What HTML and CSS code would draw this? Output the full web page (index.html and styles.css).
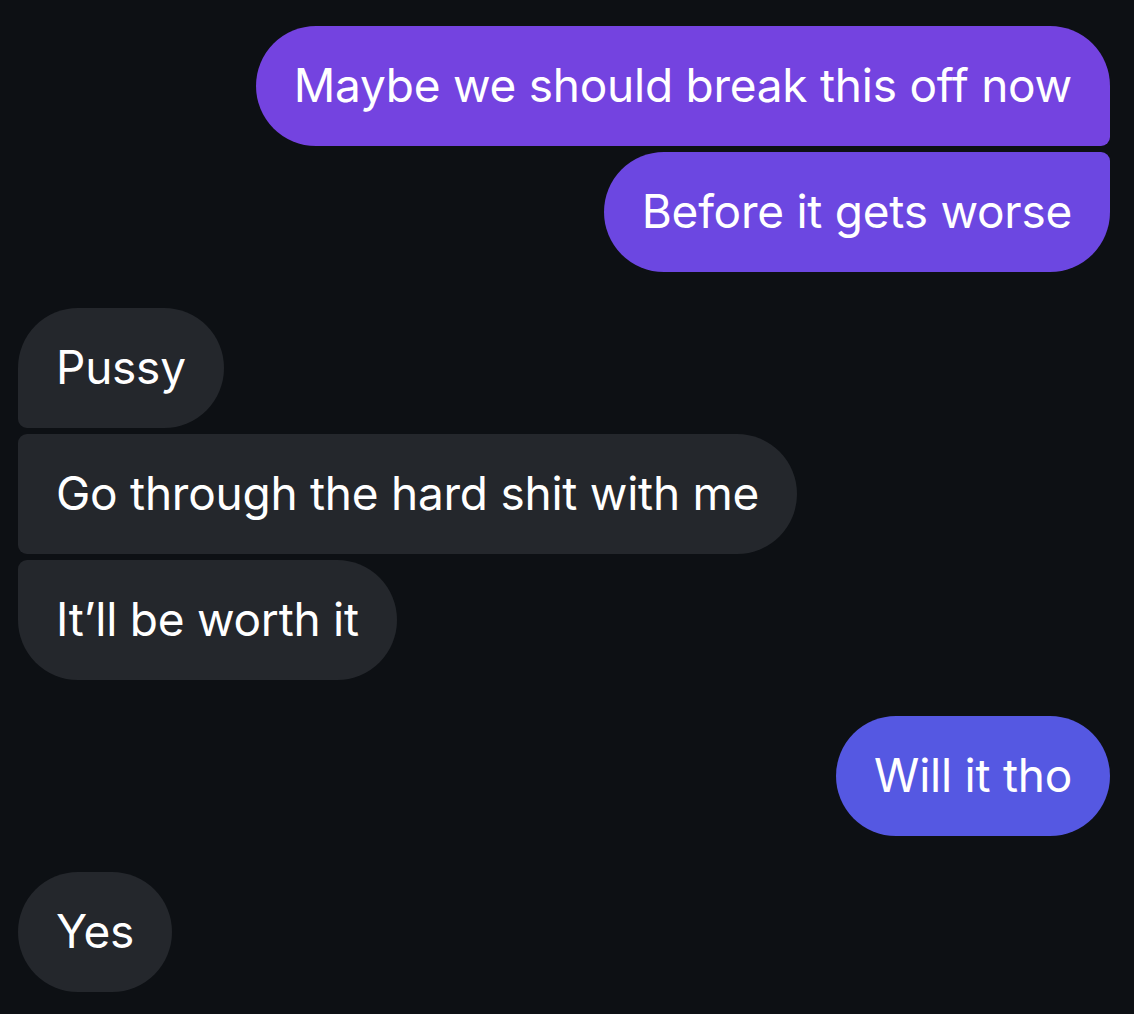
FILE: index.html
```html
<!DOCTYPE html>
<html>
<head>
<meta charset="utf-8">
<link rel="stylesheet" href="styles.css">
</head>
<body>
<div class="chat">
  <div class="group sent">
    <div class="bubble first purple1">Maybe we should break this off now</div>
    <div class="bubble last purple2">Before it gets worse</div>
  </div>
  <div class="group recv">
    <div class="bubble first">Pussy</div>
    <div class="bubble mid">Go through the hard shit with me</div>
    <div class="bubble last">It’ll be worth it</div>
  </div>
  <div class="group sent">
    <div class="bubble single blue">Will it tho</div>
  </div>
  <div class="group recv">
    <div class="bubble single">Yes</div>
  </div>
</div>
</body>
</html>
```

FILE: styles.css
```css
html, body {
  margin: 0;
  padding: 0;
  background: #0d1014;
}
body {
  width: 1134px;
  height: 1014px;
  overflow: hidden;
  font-family: Inter, "Noto Sans", sans-serif;
}
.chat {
  display: flex;
  flex-direction: column;
  gap: 36px;
  padding: 26px 24px 0 18px;
}
.group {
  display: flex;
  flex-direction: column;
  gap: 6px;
}
.group.sent { align-items: flex-end; }
.group.recv { align-items: flex-start; }
.bubble {
  height: 120px;
  display: flex;
  align-items: center;
  padding: 0 38px 3px;
  box-sizing: border-box;
  font-size: 46px;
  color: #ffffff;
  background: #24272c;
  border-radius: 60px;
  white-space: nowrap;
  letter-spacing: -0.25px;
}
.purple1 { background: #7443e0; }
.purple2 { background: #6c47e1; }
.blue { background: #5558e2; }
.sent .first { border-bottom-right-radius: 9px; }
.sent .last { border-top-right-radius: 9px; }
.recv .first { border-bottom-left-radius: 9px; }
.recv .mid { border-top-left-radius: 9px; border-bottom-left-radius: 9px; }
.recv .last { border-top-left-radius: 9px; }
```
